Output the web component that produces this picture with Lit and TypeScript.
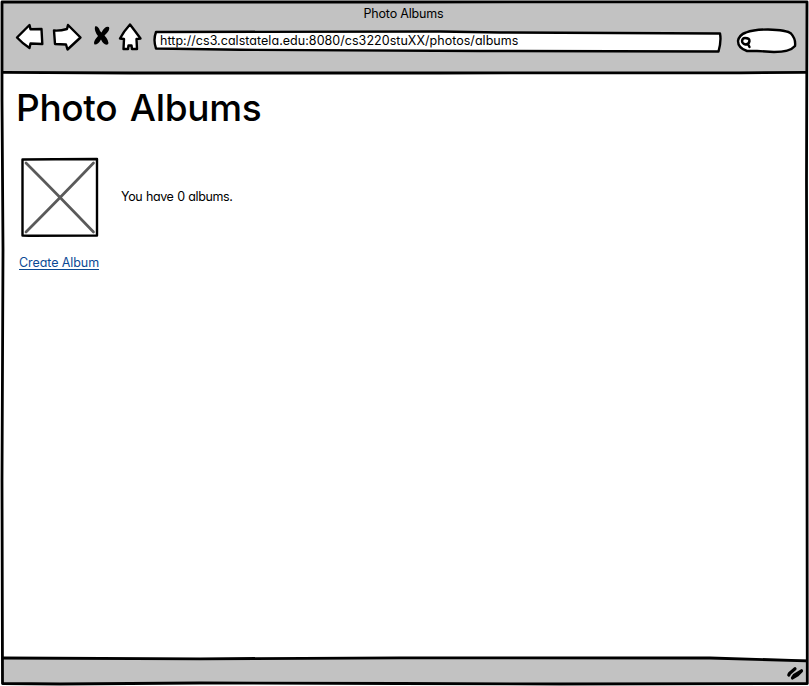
import { LitElement, html, css } from "lit";
import { customElement } from "lit/decorators.js";

@customElement("app-root")
export class AppRoot extends LitElement {
  static styles = css`
    :host {
      display: flex;
      flex-direction: column;
      position: relative;
      box-sizing: border-box;
      width: 809px;
      height: 686px;
      overflow: hidden;
      background: #fff;
      color: #000;
      font-family: Inter, "Liberation Sans", sans-serif;
      font-feature-settings: "cv11", "ss03";
      font-size: 12.5px;
      line-height: 16px;
      white-space: nowrap;
    }
    svg { display: block; flex: none; overflow: visible; }
    .ink { fill: #fff; stroke: #000; stroke-width: 2.4; stroke-linejoin: round; stroke-linecap: round; }
    .solid { fill: #000; }
    header { height: 70px; margin: 2px 3px 0; padding-top: 4px; box-sizing: border-box; background: #c2c2c2; }
    .title { text-align: center; height: 16px; padding-right: 2px; letter-spacing: -0.17px; }
    .toolbar { display: flex; align-items: flex-start; padding-left: 12px; height: 34px; }
    .address { display: grid; margin-left: 10px; }
    .address > * { grid-area: 1 / 1; }
    .url { align-self: start; padding: 11px 0 0 6px; letter-spacing: 0.04px; }
    .search { margin-left: 13px; }
    main { flex: 1; padding: 15px 0 0 16px; }
    h1 { margin: 0; font-size: 37px; font-weight: 500; line-height: 42px; letter-spacing: -0.33px; word-spacing: 3px; }
    .row { display: flex; align-items: center; margin: 28px 0 0 5px; gap: 22px; }
    .count { letter-spacing: -0.38px; word-spacing: 0.5px; }
    a { display: inline-block; margin: 20px 0 0 3px; color: #0b4a95; line-height: 12px; letter-spacing: -0.08px; text-decoration: none; border-bottom: 1px solid #0b4a95; }
    footer { height: 24px; margin: 0 3px 3px; background: #c2c2c2; display: flex; justify-content: flex-end; }
    .frame { position: absolute; inset: 0; pointer-events: none; }
    .line { fill: none; stroke: #000; stroke-width: 2.8; stroke-linejoin: round; stroke-linecap: round; }
    .cross { fill: none; stroke: #5a5a5a; stroke-width: 2.7; stroke-linecap: round; }
    .grip { fill: none; stroke: #000; stroke-width: 3.2; stroke-linecap: round; stroke-linejoin: round; }
  `;

  render() {
    return html`
      <header>
        <div class="title">Photo Albums</div>
        <div class="toolbar">
          <svg width="129" height="34" viewBox="15 22 129 34">
            <path class="ink" d="M17 37.500 L29.500 25 L30.500 29.300 L41.500 29 L42.300 44 L30.500 43.500 L29.500 48 Q22 43 17 37.500 Z" />
            <path class="ink" d="M54 30.500 Q60 31 67 29 L68 25 L80.500 37.500 L67.500 49.500 L66 44.500 L55 44 Z" />
            <path class="solid" d="M95 26.500 Q98 25.500 100 31 L101.500 32.500 Q105 25.500 109 27 Q110.500 30 104.500 35.500 Q109.500 41 108 44.300 Q104 46 101 39.500 Q98 45 94.500 44.500 Q92.500 42 98 36 Q94 31 95 26.500 Z" />
            <path class="ink" d="M130 24.500 Q124 31 120 38.500 L124 39 L123.500 49 L128 49 L128.500 45.500 L131.500 45.500 L132 49 L137 49 L136.500 39 L140.500 38.500 Q135 31 130 24.500 Z" />
          </svg>
          <div class="address">
            <svg width="569" height="34" viewBox="154 22 569 34">
              <path class="ink" d="M156 32 L440 31.500 L500 32.500 L720 33.500 Q721.500 41 718.500 51.500 L480 51 L240 49.800 L156 48.500 Q153 40 156 32 Z" />
            </svg>
            <span class="url">http://cs3.calstatela.edu:8080/cs3220stuXX/photos/albums</span>
          </div>
          <div class="search">
            <svg width="61" height="34" viewBox="736 22 61 34">
              <path class="ink" d="M746 32.500 Q754 29.500 768 29.500 Q787 30 791 33.500 Q796 39 795 46 Q790 52 774 52 L757 51 L747 51 Q738 48 738 41 Q739 35 746 32.500 Z" />
              <path class="ink" d="M745 38 Q749.500 38 749.500 41 Q749 44.500 745.500 44.500 Q742 43.500 742 41 Q742.500 38 745 38 M748 44 L749.500 47" />
            </svg>
          </div>
        </div>
      </header>
      <main>
        <h1>Photo Albums</h1>
        <div class="row">
          <svg width="78" height="80" viewBox="21 157 78 80">
            <path class="ink" d="M22.500 159.500 L55 159.300 L97 159 L97 235.500 L29 235.700 L22.500 235.500 Z" />
            <path class="cross" d="M26 163 Q58 195 93.500 232 M93.500 163 Q58 200 26 232" />
          </svg>
          <span class="count">You have 0 albums.</span>
        </div>
        <a>Create Album</a>
      </main>
      <footer>
        <svg width="24" height="24" viewBox="782 659 24 24">
          <path class="grip" d="M788.800 675 L789.500 673.500 L795 668.800 M792.500 678 L794.500 675 L801.500 670.800 L797.500 675 Z" />
        </svg>
      </footer>
      <svg class="frame" width="809" height="686" viewBox="0 0 809 686">
        <path class="line" d="M2 2 L400 2 L807 1.800 L806.500 180 L807 450 L807.300 683.500 L560 684 L400 683.500 L200 683 L60 684 L2.500 683.500 L2 480 L3 250 L2 100 Z" />
        <path class="line" d="M3 72.300 L130 73 L440 73 L740 72.800 L806 72.300" />
        <path class="line" d="M3 658 L200 658.800 L400 657.800 L710 658 L806 660.800" />
      </svg>
    `;
  }
}
